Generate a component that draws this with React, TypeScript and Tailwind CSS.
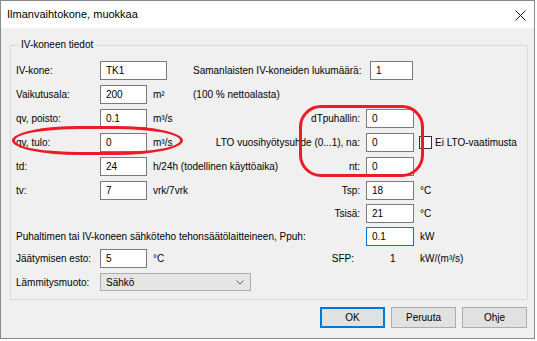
import type { ReactNode } from "react";

const inputCls =
  "h-[19px] border border-[#7a7a7a] bg-white pl-[5px] text-[10px] text-black outline-none";

function Field({ value, w = "w-[47px]", focused = false }: { value: string; w?: string; focused?: boolean }) {
  return (
    <input
      readOnly
      defaultValue={value}
      className={`${inputCls} ${w} ${focused ? "border-[#0078d7]" : ""}`}
    />
  );
}

function Row({ h = "h-[24px]", children }: { h?: string; children: ReactNode }) {
  return <div className={`flex items-center ${h}`}>{children}</div>;
}

function Left({ label, value, unit, w }: { label?: string; value?: string; unit?: string; w?: string }) {
  return (
    <div className="flex w-[177px] shrink-0 items-center">
      <span className="w-[84px] shrink-0">{label}</span>
      {value !== undefined && <Field value={value} w={w} />}
      {unit && <span className="ml-[6px] whitespace-nowrap">{unit}</span>}
    </div>
  );
}

function Right({ label, value, unit, focused }: { label: string; value: string; unit?: string; focused?: boolean }) {
  return (
    <div className="flex items-center">
      <span className="w-[167px] shrink-0 whitespace-nowrap text-right">{label}</span>
      <span className="ml-[6px]">
        <Field value={value} w="w-[48px]" focused={focused} />
      </span>
      {unit && <span className="ml-[6px] whitespace-nowrap">{unit}</span>}
    </div>
  );
}

function Btn({ label, primary = false }: { label: string; primary?: boolean }) {
  return (
    <button
      className={`h-[21px] w-[65px] border bg-[#e1e1e1] text-[10px] text-black ${
        primary ? "border-[#0078d7] shadow-[inset_0_0_0_1px_#0078d7]" : "border-[#adadad]"
      }`}
    >
      {label}
    </button>
  );
}

export default function App() {
  return (
    <div className="relative h-[341px] w-[537px] bg-white font-['Liberation_Sans',Arial,sans-serif] text-[10px] text-black">
      <div className="flex h-[339px] w-[535px] flex-col border border-[#8a8a8a] bg-[#f0f0f0]">
        <div className="flex h-[27px] shrink-0 items-center justify-between bg-white pl-[6px] pr-[8px]">
          <span className="text-[11px]">Ilmanvaihtokone, muokkaa</span>
          <svg width="11" height="11" viewBox="0 0 11 11" className="mt-[1px]">
            <path d="M0.5 0.5 L10.5 10.5 M10.5 0.5 L0.5 10.5" stroke="#111" strokeWidth="1" />
          </svg>
        </div>

        <fieldset className="ml-[9px] mr-[6px] mt-[10px] border border-[#dcdcdc] pb-[5px] pl-[5px]">
          <legend className="ml-[3px] px-[2px] leading-[14px]">IV-koneen tiedot</legend>
          <div className="pt-[6px]">
            <Row>
              <Left label="IV-kone:" value="TK1" w="w-[67px]" />
              <span className="w-[177px] shrink-0 whitespace-nowrap">Samanlaisten IV-koneiden lukumäärä:</span>
              <Field value="1" w="w-[43px]" />
            </Row>
            <Row>
              <Left label="Vaikutusala:" value="200" unit="m²" />
              <span>(100 % nettoalasta)</span>
            </Row>
            <Row>
              <Left label="qv, poisto:" value="0.1" unit="m³/s" />
              <Right label="dTpuhallin:" value="0" />
            </Row>
            <Row>
              <Left label="qv, tulo:" value="0" unit="m³/s" />
              <Right label="LTO vuosihyötysuhde (0...1), na:" value="0" />
              <span className="ml-[5px] h-[13px] w-[13px] border border-[#333] bg-white" />
              <span className="ml-[3px]">Ei LTO-vaatimusta</span>
            </Row>
            <Row>
              <Left label="td:" value="24" unit="h/24h (todellinen käyttöaika)" />
              <Right label="nt:" value="0" />
            </Row>
            <Row>
              <Left label="tv:" value="7" unit="vrk/7vrk" />
              <Right label="Tsp:" value="18" unit="°C" />
            </Row>
            <Row h="h-[23px]">
              <Left />
              <Right label="Tsisä:" value="21" unit="°C" />
            </Row>
            <Row h="h-[22px]">
              <span className="w-[350px] shrink-0 whitespace-nowrap">
                Puhaltimen tai IV-koneen sähköteho tehonsäätölaitteineen, Ppuh:
              </span>
              <Field value="0.1" w="w-[48px]" focused />
              <span className="ml-[6px]">kW</span>
            </Row>
            <Row h="h-[23px]">
              <Left label="Jäätymisen esto:" value="5" unit="°C" />
              <span className="w-[161px] shrink-0 text-right">SFP:</span>
              <span className="w-[66px] shrink-0 pl-[36px]">1</span>
              <span>kW/(m³/s)</span>
            </Row>
            <Row>
              <span className="w-[84px] shrink-0">Lämmitysmuoto:</span>
              <div className="flex h-[18px] w-[151px] items-center justify-between border border-[#adadad] bg-[#e5e5e5] pl-[5px] pr-[6px]">
                <span>Sähkö</span>
                <svg width="8" height="5" viewBox="0 0 8 5">
                  <path d="M0.5 0.5 L4 4 L7.5 0.5" fill="none" stroke="#606060" strokeWidth="1" />
                </svg>
              </div>
            </Row>
          </div>
        </fieldset>

        <div className="mr-[7px] mt-[7px] flex justify-end gap-[6px]">
          <Btn label="OK" primary />
          <Btn label="Peruuta" />
          <Btn label="Ohje" />
        </div>
      </div>

      {/* red annotation marks over the form */}
      <div className="absolute left-[12px] top-[126px] h-[29px] w-[171px] rounded-[70px/15px] border-[3px] border-[#ec1c24]" />
      <div className="absolute left-[299px] top-[105px] h-[72px] w-[125px] rounded-[22px] border-[3px] border-[#ec1c24]" />
    </div>
  );
}
